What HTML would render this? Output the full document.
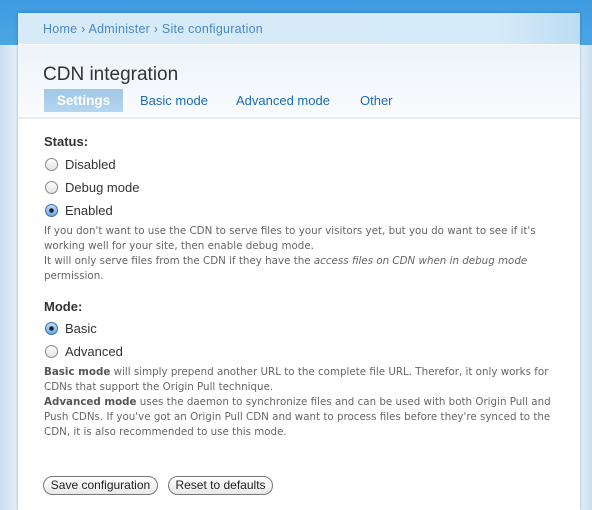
<!DOCTYPE html>
<html><head><style>
*{margin:0;padding:0;box-sizing:border-box}
body{width:592px;height:510px;overflow:hidden;background:#d3e5f2;font-family:"Liberation Sans",sans-serif;position:relative}
.top{position:absolute;left:0;top:0;width:592px;height:45px;background:linear-gradient(#3f9be0,#4aa6e2)}
.side{position:absolute;left:0;top:45px;width:592px;height:465px;background:linear-gradient(90deg,#c9def0,#e6f0f8 18px,#e6f0f8 580px,#c9ddee)}
.panel{position:absolute;left:18px;top:13px;width:562px;height:497px;background:#fff;box-shadow:0 0 3px rgba(0,60,120,.35)}
.crumb{height:32px;background:linear-gradient(90deg,#d6eaf8,#d6ebf9 85%,#bcdcf3);border-bottom:1px solid #fff;color:#4a88c4;font-size:12.5px;letter-spacing:.25px;padding:9px 0 0 25px}
.head{height:74px;background:linear-gradient(#ecf3f9,#fafcfe);border-bottom:2px solid #e8eef3;position:relative}
h1{position:absolute;left:25px;top:19px;font-weight:normal;font-size:19px;color:#333}
.tabs{position:absolute;left:26px;top:44px;font-size:13px;color:#1a6bb8}
.tabs span{position:absolute;top:0;height:23px;line-height:23px;white-space:nowrap}
.tabs .act{left:0;width:79px;background:linear-gradient(#a0c8e6,#b4d5ee);color:#fff;font-weight:bold;text-align:center;font-size:13.5px}
.l{position:absolute;left:44px;font-size:13px;color:#333;white-space:nowrap}
.b{font-weight:bold}
.r{position:absolute;left:45px;width:13px;height:13px;border-radius:50%;border:1px solid #8a8a8a;background:linear-gradient(#fff,#e2e2e2)}
.r.on{border-color:#3a6fb0;background:radial-gradient(circle,#222 0 2px,transparent 2.5px),linear-gradient(#bfdcfa,#6aa7e8)}
.d{position:absolute;left:44px;font-family:"DejaVu Sans",sans-serif;font-size:10.3px;color:#666;line-height:15px;white-space:nowrap}
.d b{color:#555}
.btn{position:absolute;top:476px;height:19px;border:1px solid #777;border-radius:10px;background:linear-gradient(#fff,#e8e8e8);font-size:12px;color:#222;line-height:17px;text-align:center}
</style></head><body>
<div class="top"></div><div class="side"></div>
<div class="panel">
<div class="crumb">Home › Administer › Site configuration</div>
<div class="head"><h1>CDN integration</h1>
<div class="tabs"><span class="act">Settings</span><span style="left:96px">Basic mode</span><span style="left:192px">Advanced mode</span><span style="left:316px">Other</span></div></div>
</div>
<div class="l b" style="top:134px">Status:</div>
<div class="r" style="top:158px"></div><div class="l" style="top:157px;left:65px">Disabled</div>
<div class="r" style="top:181px"></div><div class="l" style="top:180px;left:65px">Debug mode</div>
<div class="r on" style="top:204px"></div><div class="l" style="top:203px;left:65px">Enabled</div>
<div class="d" style="top:224px">If you don't want to use the CDN to serve files to your visitors yet, but you do want to see if it's<br>working well for your site, then enable debug mode.<br>It will only serve files from the CDN if they have the <i>access files on CDN when in debug mode</i><br>permission.</div>
<div class="l b" style="top:299px">Mode:</div>
<div class="r on" style="top:322px"></div><div class="l" style="top:321px;left:65px">Basic</div>
<div class="r" style="top:345px"></div><div class="l" style="top:344px;left:65px">Advanced</div>
<div class="d" style="top:365px"><b>Basic mode</b> will simply prepend another URL to the complete file URL. Therefor, it only works for<br>CDNs that support the Origin Pull technique.<br><b>Advanced mode</b> uses the daemon to synchronize files and can be used with both Origin Pull and<br>Push CDNs. If you've got an Origin Pull CDN and want to process files before they're synced to the<br>CDN, it is also recommended to use this mode.</div>
<div class="btn" style="left:43px;width:115px">Save configuration</div>
<div class="btn" style="left:168px;width:105px">Reset to defaults</div>
</body></html>
